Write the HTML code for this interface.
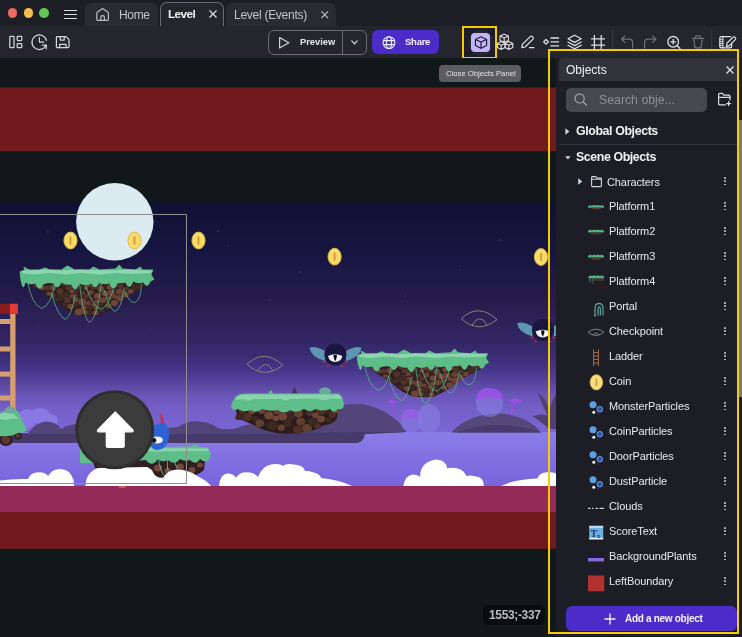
<!DOCTYPE html>
<html><head><meta charset="utf-8">
<style>
*{box-sizing:border-box;margin:0;padding:0}
html,body{width:742px;height:637px;overflow:hidden;background:#1d1d26;font-family:"Liberation Sans",sans-serif;color:#e6e6ea}
.a{position:absolute}
.t{position:absolute;white-space:nowrap;line-height:1;will-change:transform}
svg{position:absolute;overflow:visible}
.row{position:absolute;left:556px;width:180px;height:25px}
.row .n{position:absolute;left:53px;top:7px;font-size:10.9px;color:#ececf0;white-space:nowrap;line-height:1}
.row .k{position:absolute;left:168px;top:8px;width:2px;height:9px}
.k i{position:absolute;left:0.2px;width:1.7px;height:1.7px;border-radius:1px;background:#d4d4d8}
</style></head><body>
<!-- title bar -->
<div class="a" style="left:0;top:0;width:742px;height:26px;background:#1d1d26"></div>
<div class="a" style="left:7.8px;top:8.3px;width:9.5px;height:9.5px;border-radius:50%;background:#ec6a5f"></div>
<div class="a" style="left:23.6px;top:8.3px;width:9.5px;height:9.5px;border-radius:50%;background:#f4bf4f"></div>
<div class="a" style="left:39px;top:8.3px;width:9.5px;height:9.5px;border-radius:50%;background:#61c454"></div>
<div class="a" style="left:63.6px;top:9.6px;width:13.8px;height:1.3px;background:#dcdce0"></div>
<div class="a" style="left:63.6px;top:13.7px;width:13.8px;height:1.3px;background:#dcdce0"></div>
<div class="a" style="left:63.6px;top:17.9px;width:13.8px;height:1.3px;background:#dcdce0"></div>
<!-- tabs -->
<div class="a" style="left:85px;top:2.5px;width:73px;height:23.5px;background:#2a2a33;border-radius:6px 6px 0 0"></div>
<svg style="left:96px;top:8px" width="14" height="13" viewBox="0 0 14 13"><path d="M0.8 5.2 Q0.8 4.4 1.5 3.9 L6.6 0.6 L11.7 3.9 Q12.4 4.4 12.4 5.2 V11.6 Q12.4 12.4 11.6 12.4 H1.6 Q0.8 12.4 0.8 11.6 Z M4.8 12.4 V9.3 Q4.8 7.6 6.6 7.6 Q8.4 7.6 8.4 9.3 V12.4" fill="none" stroke="#bdbdc2" stroke-width="1.2" stroke-linejoin="round"/></svg>
<div class="t" style="left:119px;top:9px;font-size:12px;letter-spacing:-0.35px;color:#c4c4c8">Home</div>
<div class="a" style="left:160px;top:2px;width:63.5px;height:25px;background:#25252e;border:1px solid #6a6a72;border-bottom:none;border-radius:7px 7px 0 0"></div>
<div class="t" style="left:168.4px;top:9px;font-size:11.8px;font-weight:700;letter-spacing:-0.6px;color:#f0f0f2">Level</div>
<svg style="left:209px;top:10px" width="8" height="8" viewBox="0 0 8 8"><path d="M0.5 0.5 L7.5 7.5 M7.5 0.5 L0.5 7.5" stroke="#e0e0e4" stroke-width="1.2"/></svg>
<div class="a" style="left:225.5px;top:2.5px;width:110px;height:23.5px;background:#2a2a33;border-radius:6px 6px 0 0"></div>
<div class="t" style="left:234px;top:9px;font-size:12px;letter-spacing:-0.27px;color:#c4c4c8">Level (Events)</div>
<svg style="left:321px;top:10.5px" width="7.5" height="7.5" viewBox="0 0 8 8"><path d="M0.5 0.5 L7.5 7.5 M7.5 0.5 L0.5 7.5" stroke="#c4c4c8" stroke-width="1.2"/></svg>

<!-- toolbar -->
<div class="a" style="left:0;top:26px;width:742px;height:32px;background:#25252e"></div>


<!-- toolbar icons left -->
<svg style="left:0;top:0" width="742" height="58" viewBox="0 0 742 58">
 <g fill="none" stroke="#d6d6da" stroke-width="1.25" stroke-linecap="round" stroke-linejoin="round">
  <rect x="9.8" y="36.3" width="4.2" height="11.4" rx="0.8"/>
  <rect x="17.2" y="36.3" width="4.6" height="4.2" rx="0.8"/>
  <rect x="17.2" y="43.5" width="4.6" height="4.2" rx="0.8"/>
  <path d="M46.4 40.4 A7.3 7.3 0 1 0 45.9 45.4"/>
  <path d="M39.4 37.6 V42.1 H43.8"/>
  <path d="M42.4 45 H46.3 V48.8"/>
  <path d="M57.2 36.6 H66 L69 39.6 V46.6 Q69 47.6 68 47.6 H57.2 Q56.4 47.6 56.4 46.8 V37.4 Q56.4 36.6 57.2 36.6 Z"/>
  <path d="M60.3 36.6 V40 H64.2 V36.6"/>
  <path d="M59.6 47.6 V44.4 H66 V47.6"/>
 </g>
</svg>
<!-- preview button -->
<div class="a" style="left:267.5px;top:29.5px;width:99px;height:25.5px;border:1px solid #6c6c74;border-radius:6px"></div>
<div class="a" style="left:342.3px;top:30px;width:1px;height:24.5px;background:#6c6c74"></div>
<svg style="left:278px;top:35.5px" width="12" height="13" viewBox="0 0 12 13"><path d="M1.6 1.6 L10.8 6.8 L1.6 12 Z" fill="none" stroke="#d6d6da" stroke-width="1.2" stroke-linejoin="round"/></svg>
<div class="t" style="left:299.8px;top:38px;font-size:9.3px;font-weight:700;color:#e6e6ea">Preview</div>
<svg style="left:351px;top:40px" width="7" height="5" viewBox="0 0 7 5"><path d="M0.8 0.8 L3.5 3.8 L6.2 0.8" fill="none" stroke="#d6d6da" stroke-width="1.2" stroke-linecap="round"/></svg>
<!-- share button -->
<div class="a" style="left:372px;top:29.7px;width:66.5px;height:24.5px;background:#4c2cc8;border-radius:6px"></div>
<svg style="left:382px;top:35.5px" width="14" height="14" viewBox="0 0 14 14"><g fill="none" stroke="#f0f0f4" stroke-width="1.1"><circle cx="7" cy="6.6" r="5.9"/><ellipse cx="7" cy="6.6" rx="2.6" ry="5.9"/><path d="M1.4 4.6 H12.6 M1.4 8.6 H12.6"/></g></svg>
<div class="t" style="left:405px;top:37px;font-size:9.5px;font-weight:700;letter-spacing:-0.25px;color:#f4f4f8">Share</div>
<!-- objects toggle (highlighted) -->
<div class="a" style="left:462.2px;top:26px;width:35.3px;height:32.6px;background:#1d1d2a;border:2px solid #f4cc00"></div>
<div class="a" style="left:467.5px;top:29.5px;width:26px;height:26px;border-radius:50%;background:#25252f"></div>
<div class="a" style="left:471px;top:32.7px;width:19.2px;height:19.2px;border-radius:4px;background:#c3b3fb"></div>
<svg style="left:474px;top:35.5px" width="14" height="13" viewBox="0 0 14 13"><g fill="none" stroke="#1e1830" stroke-width="1.15" stroke-linejoin="round"><path d="M7 0.8 L12.6 3.4 V9.4 L7 12.2 L1.4 9.4 V3.4 Z"/><path d="M1.4 3.4 L7 6 L12.6 3.4 M7 6 V12.2"/></g></svg>
<!-- right icons -->
<svg style="left:0;top:0" width="742" height="58" viewBox="0 0 742 58">
 <g fill="none" stroke="#e0e0e4" stroke-width="1.1" stroke-linejoin="round">
  <path d="M504.2 34.2 L508.4 36.1 V40.4 L504.2 42.3 L500 40.4 V36.1 Z M500 36.1 L504.2 38 L508.4 36.1 M504.2 38 V42.3"/>
  <path d="M501.2 41.6 L505.2 43.4 V47.6 L501.2 49.4 L497.4 47.6 V43.4 Z M497.4 43.4 L501.2 45.2 L505.2 43.4 M501.2 45.2 V49.4"/>
  <path d="M508.8 41.6 L512.8 43.4 V47.6 L508.8 49.4 L505 47.6 V43.4 Z M505 43.4 L508.8 45.2 L512.8 43.4 M508.8 45.2 V49.4"/>
 </g>
 <g fill="none" stroke="#e0e0e4" stroke-width="1.25" stroke-linecap="round" stroke-linejoin="round">
  <path d="M522 47.6 L522.3 44.4 L530.3 36.6 Q531.3 35.7 532.3 36.6 L533 37.3 Q533.8 38.2 533 39.1 L525 47 Z"/>
  <path d="M529.5 47.7 H533.8"/>
  <path d="M546 39.5 L548.4 41.8 L546 44.1 L543.7 41.8 Z"/>
  <path d="M551 38 H558.5 M551 41.9 H558.5 M551 45.9 H558.5" stroke-width="1.4"/>
  <path d="M574.6 35.2 L581.2 38.8 L574.6 42.4 L568 38.8 Z"/>
  <path d="M568 42 L574.6 45.6 L581.2 42 M568 45.2 L574.6 48.8 L581.2 45.2"/>
  <path d="M594.4 35 V49 M601.2 35 V49 M591.1 38.9 H605 M591.1 45 H605" stroke-linecap="butt"/>
 </g>
 <rect x="612.2" y="29.6" width="1" height="22" fill="#3c3c46"/>
 <rect x="711.3" y="29.6" width="1" height="22" fill="#3c3c46"/>
 <g fill="none" stroke="#6e6e78" stroke-width="1.25" stroke-linecap="round" stroke-linejoin="round">
  <path d="M632.6 48 V42.6 Q632.6 39.2 629.2 39.2 H621.8 M624.8 36 L621.6 39.2 L624.8 42.4"/>
  <path d="M644.6 48 V42.6 Q644.6 39.2 648 39.2 H655.6 M652.6 36 L655.8 39.2 L652.6 42.4"/>
  <path d="M692.4 38.4 H703.6 M695.6 38.4 V36.6 Q695.6 35.8 696.4 35.8 H699.6 Q700.4 35.8 700.4 36.6 V38.4 M693.8 38.4 L694.8 47.2 Q694.9 47.9 695.6 47.9 H700.4 Q701.1 47.9 701.2 47.2 L702.2 38.4"/>
 </g>
 <g fill="none" stroke="#e0e0e4" stroke-width="1.3" stroke-linecap="round" stroke-linejoin="round">
  <circle cx="673.2" cy="41.8" r="5.3"/>
  <path d="M677 45.6 L680 48.4 M673.2 39.5 V44.1 M670.9 41.8 H675.5"/>
  <path d="M730.5 36.6 H721.4 Q719.8 36.6 719.8 38.2 V46.2 Q719.8 47.8 721.4 47.8 H730 Q731.6 47.8 731.6 46.2 V43.2"/>
  <path d="M722.9 36.6 V47.8" stroke-width="1.1"/>
  <path d="M720.4 39.6 H722.4 M720.4 41.6 H722.4 M720.4 43.5 H722.4 M720.4 45.4 H722.4" stroke-width="0.8"/>
  <path d="M726.4 46.4 L726.9 43.3 L733 37.3 Q734 36.4 735 37.3 L735.3 37.6 Q736.2 38.6 735.3 39.6 L729.4 45.6 Z" stroke-width="1.2"/>
 </g>
</svg>

<!-- scene canvas -->
<div class="a" id="scene" style="left:0;top:58px;width:556px;height:579px;background:#11181a;overflow:hidden">
<svg style="left:0;top:0" width="556" height="579" viewBox="0 58 556 579">
<defs>
 <linearGradient id="gnd" x1="0" y1="432" x2="0" y2="486" gradientUnits="userSpaceOnUse"><stop offset="0" stop-color="#8c7ce8"/><stop offset="1" stop-color="#7864dc"/></linearGradient>
 <linearGradient id="sky" x1="0" y1="202.6" x2="0" y2="486" gradientUnits="userSpaceOnUse">
  <stop offset="0" stop-color="#0e1234"/>
  <stop offset="0.167" stop-color="#161540"/>
  <stop offset="0.344" stop-color="#261c4c"/>
  <stop offset="0.414" stop-color="#2c2258"/>
  <stop offset="0.485" stop-color="#322664"/>
  <stop offset="0.538" stop-color="#3a2c72"/>
  <stop offset="0.591" stop-color="#46368a"/>
  <stop offset="0.643" stop-color="#5a48a2"/>
  <stop offset="0.679" stop-color="#6a56b8"/>
  <stop offset="0.732" stop-color="#7460c8"/>
  <stop offset="0.81" stop-color="#7a66d4"/>
  <stop offset="1" stop-color="#7864dc"/>
 </linearGradient>
 <symbol id="plat" viewBox="0 0 135 61" preserveAspectRatio="none">
  <path d="M3 13 L12 20 L22 27 L34 35 L46 45 L58 51 L78 51 L92 44 L104 34 L116 27 L129 20 L129 13 Z" fill="#2f1f20"/>
  <g><ellipse cx="71.3" cy="27.9" rx="2.9" ry="2.5" fill="#684234"/><ellipse cx="81.0" cy="17.3" rx="3.7" ry="3.2" fill="#684234"/><ellipse cx="106.9" cy="24.1" rx="2.4" ry="2.1" fill="#523428"/><ellipse cx="63.2" cy="37.4" rx="4.2" ry="3.6" fill="#684234"/><ellipse cx="82.3" cy="45.4" rx="2.7" ry="2.3" fill="#402a24"/><ellipse cx="94.9" cy="38.5" rx="3.6" ry="3.0" fill="#6e4638"/><ellipse cx="59.4" cy="47.7" rx="4.2" ry="3.5" fill="#6e4638"/><ellipse cx="18.2" cy="19.8" rx="4.3" ry="3.7" fill="#523428"/><ellipse cx="42.2" cy="32.8" rx="3.8" ry="3.2" fill="#402a24"/><ellipse cx="48.1" cy="35.5" rx="3.2" ry="2.8" fill="#523428"/><ellipse cx="40.3" cy="17.2" rx="3.7" ry="3.1" fill="#684234"/><ellipse cx="124.2" cy="18.1" rx="4.3" ry="3.6" fill="#402a24"/><ellipse cx="55.3" cy="20.3" rx="4.2" ry="3.5" fill="#6e4638"/><ellipse cx="29.4" cy="29.3" rx="2.5" ry="2.1" fill="#684234"/><ellipse cx="24.9" cy="16.5" rx="3.7" ry="3.2" fill="#684234"/><ellipse cx="83.2" cy="35.8" rx="3.5" ry="3.0" fill="#684234"/><ellipse cx="71.8" cy="15.4" rx="3.5" ry="3.0" fill="#402a24"/><ellipse cx="51.2" cy="42.0" rx="3.1" ry="2.6" fill="#6e4638"/><ellipse cx="74.4" cy="40.7" rx="2.5" ry="2.1" fill="#684234"/><ellipse cx="106.1" cy="30.3" rx="3.1" ry="2.7" fill="#6e4638"/><ellipse cx="47.5" cy="29.6" rx="3.0" ry="2.5" fill="#402a24"/><ellipse cx="116.7" cy="22.8" rx="4.5" ry="3.8" fill="#402a24"/><ellipse cx="40.7" cy="26.9" rx="3.5" ry="3.0" fill="#523428"/><ellipse cx="103.3" cy="16.6" rx="3.0" ry="2.6" fill="#684234"/><ellipse cx="95.7" cy="21.0" rx="2.4" ry="2.1" fill="#6e4638"/><ellipse cx="99.8" cy="27.3" rx="3.4" ry="2.9" fill="#684234"/><ellipse cx="70.2" cy="43.6" rx="2.8" ry="2.4" fill="#402a24"/><ellipse cx="109.3" cy="16.7" rx="3.8" ry="3.2" fill="#684234"/><ellipse cx="45.3" cy="19.3" rx="2.8" ry="2.4" fill="#523428"/><ellipse cx="91.9" cy="28.3" rx="3.6" ry="3.1" fill="#684234"/><ellipse cx="56.9" cy="29.9" rx="2.6" ry="2.2" fill="#402a24"/><ellipse cx="27.4" cy="23.7" rx="2.9" ry="2.5" fill="#523428"/><ellipse cx="89.0" cy="41.5" rx="2.8" ry="2.3" fill="#684234"/><ellipse cx="63.5" cy="28.4" rx="2.5" ry="2.1" fill="#523428"/><ellipse cx="77.9" cy="31.4" rx="3.5" ry="2.9" fill="#6e4638"/><ellipse cx="33.6" cy="23.2" rx="3.4" ry="2.9" fill="#684234"/><ellipse cx="87.0" cy="15.2" rx="3.7" ry="3.1" fill="#523428"/><ellipse cx="76.3" cy="48.4" rx="2.9" ry="2.4" fill="#6e4638"/><ellipse cx="45.7" cy="40.2" rx="2.7" ry="2.3" fill="#402a24"/><ellipse cx="66.6" cy="23.7" rx="2.5" ry="2.1" fill="#6e4638"/><ellipse cx="55.9" cy="41.0" rx="2.8" ry="2.4" fill="#402a24"/><ellipse cx="74.2" cy="22.1" rx="3.6" ry="3.0" fill="#523428"/><ellipse cx="72.3" cy="35.4" rx="3.2" ry="2.8" fill="#402a24"/><ellipse cx="93.1" cy="15.1" rx="3.7" ry="3.2" fill="#523428"/><ellipse cx="34.0" cy="17.7" rx="3.2" ry="2.7" fill="#402a24"/><ellipse cx="52.7" cy="26.7" rx="2.7" ry="2.3" fill="#684234"/><ellipse cx="100.5" cy="33.7" rx="3.7" ry="3.2" fill="#684234"/><ellipse cx="61.8" cy="22.8" rx="2.6" ry="2.2" fill="#402a24"/><ellipse cx="56.2" cy="35.4" rx="3.1" ry="2.7" fill="#684234"/><ellipse cx="33.6" cy="31.4" rx="2.6" ry="2.2" fill="#523428"/><ellipse cx="90.0" cy="22.5" rx="2.9" ry="2.5" fill="#6e4638"/><ellipse cx="70.4" cy="48.9" rx="2.8" ry="2.4" fill="#402a24"/><ellipse cx="101.3" cy="22.0" rx="2.9" ry="2.5" fill="#523428"/><ellipse cx="117.8" cy="16.0" rx="2.6" ry="2.2" fill="#402a24"/><ellipse cx="69.3" cy="20.1" rx="2.6" ry="2.2" fill="#684234"/><ellipse cx="61.9" cy="16.1" rx="3.0" ry="2.6" fill="#402a24"/><ellipse cx="85.9" cy="29.2" rx="3.5" ry="3.0" fill="#6e4638"/><ellipse cx="81.4" cy="24.4" rx="3.5" ry="3.0" fill="#684234"/><ellipse cx="67.0" cy="31.5" rx="2.8" ry="2.4" fill="#523428"/><ellipse cx="48.5" cy="15.1" rx="2.4" ry="2.1" fill="#684234"/><ellipse cx="13.2" cy="15.3" rx="3.5" ry="3.0" fill="#684234"/><ellipse cx="89.7" cy="33.7" rx="2.4" ry="2.1" fill="#684234"/><ellipse cx="65.5" cy="47.8" rx="2.8" ry="2.4" fill="#684234"/><ellipse cx="111.2" cy="26.9" rx="2.8" ry="2.4" fill="#6e4638"/><ellipse cx="49.0" cy="23.6" rx="3.0" ry="2.5" fill="#523428"/><ellipse cx="22.7" cy="23.5" rx="2.6" ry="2.2" fill="#6e4638"/><ellipse cx="80.2" cy="41.0" rx="2.9" ry="2.4" fill="#402a24"/><ellipse cx="64.4" cy="43.2" rx="2.9" ry="2.5" fill="#684234"/><ellipse cx="77.2" cy="37.2" rx="2.5" ry="2.1" fill="#6e4638"/><ellipse cx="95.3" cy="32.2" rx="2.6" ry="2.2" fill="#684234"/><ellipse cx="52.9" cy="31.8" rx="2.5" ry="2.1" fill="#684234"/><ellipse cx="37.5" cy="35.2" rx="2.5" ry="2.1" fill="#402a24"/><ellipse cx="69.0" cy="39.0" rx="2.5" ry="2.1" fill="#684234"/><ellipse cx="57.4" cy="25.5" rx="2.5" ry="2.1" fill="#402a24"/><ellipse cx="76.8" cy="44.0" rx="2.5" ry="2.1" fill="#684234"/></g>
  <path d="M0 7 L5 6 L4 2 L10 5 L20 5 L26 3 L30 5 L42 5 L48 1 L52 3 L55 5 L70 5 L74 2 L80 5 L96 4 L100 0 L103 4 L116 5 L121 2 L123 5 L134 5 L132 10 L135 15 L131 17 Q128 25 124 18 Q118 20 114 17 Q110 27 106 18 L98 19 Q94 29 90 19 Q84 21 80 18 Q76 27 72 19 Q66 22 60 19 Q56 30 52 20 Q46 21 42 18 Q38 27 34 19 Q28 18 24 20 Q20 29 16 19 Q10 21 6 18 Q4 27 2 19 L1 15 Z" fill="#5ebe8a"/>
  <path d="M2 6 L30 5 L42 6 L60 5 L90 6 L110 5 L133 6 L131 8.5 L112 9.5 L98 8.5 L80 10 L62 8.5 L46 10 L30 8.5 L14 10 L3 9 Z" fill="#92d8b2" opacity="0.9"/>
 </symbol>
 <symbol id="vines" viewBox="0 0 135 61" preserveAspectRatio="none">
  <g fill="none" stroke="#5cbc8c" stroke-width="0.9" opacity="0.85">
   <path d="M8 16 Q12 40 22 44 Q32 42 36 16"/>
   <path d="M32 28 Q38 52 46 55 Q52 52 56 30"/>
   <path d="M60 18 Q64 54 70 58 Q78 54 82 18"/>
   <path d="M64 15 Q72 42 82 45 Q92 40 96 14"/>
   <path d="M85 26 Q90 46 96 47 Q102 44 104 26"/>
   <path d="M104 24 Q110 40 116 38 Q122 34 122 20"/>
  </g>
 </symbol>
</defs>
<rect x="0" y="87.5" width="556" height="63.8" fill="#701a1e"/>
<rect x="0" y="202.6" width="556" height="283.4" fill="url(#sky)"/>
<!-- stars -->
<g fill="#3c3a6e">
 <circle cx="48" cy="232" r="0.8"/><circle cx="218" cy="231" r="0.9"/><circle cx="228" cy="246" r="0.7"/><circle cx="300" cy="272" r="0.8"/>
 <circle cx="270" cy="300" r="0.7"/><circle cx="405" cy="296" r="0.8"/><circle cx="150" cy="330" r="0.7"/><circle cx="40" cy="325" r="0.7"/>
 <circle cx="500" cy="240" r="0.8"/><circle cx="460" cy="270" r="0.7"/>
</g>
<!-- far lavender clouds -->
<g fill="#8a78e4">
 <ellipse cx="27" cy="419" rx="9" ry="10"/><ellipse cx="40" cy="416" rx="10" ry="8"/><ellipse cx="50" cy="421" rx="8" ry="7"/>
</g>
<!-- ground band -->
<rect x="0" y="432" width="556" height="54" fill="url(#gnd)"/>
<!-- hills -->
<path d="M0 443 V433 H28 Q38 421 47 421.5 Q57 422 61 429 Q68 424 80 424 L150 430 Q165 428 178 427 Q188 420 199 421.6 Q210 422 218 428 Q230 431 240 427 Q250 423 258 425 Q268 430 285 426 Q320 403 362 404 Q392 410 407 432 L365 434 Q363 443 355 443 Z" fill="#52457a"/>
<path d="M0 443 V434 L150 434 Q250 435 300 433 Q340 432 380 432 L407 432 L365 434 Q363 443 355 443 Z" fill="#473a6b"/>
<path d="M451 432.5 Q470 413 500 413.5 Q528 416 541 432.5 Z" fill="#54477a"/>
<path d="M456 432.5 Q480 424 500 425 Q525 426 541 432.5 Z" fill="#483b6c"/>
<path d="M537.5 392.3 Q546 398 549 410 Q552 400 556 394 V429 Q550 429 547 427 Q540 421 532.3 416.3 Q541 413 547.5 415.5 Q542 404 537.5 392.3 Z" fill="#4e4070"/>
<!-- mushrooms -->
<g opacity="0.9">
 <rect x="401" y="409" width="20" height="24" rx="10" fill="#8a7ce4" opacity="0.6"/>
 <path d="M401 419 Q401 409 411 409 Q421 409 421 419 Q411 416 401 419 Z" fill="#a05ae8" opacity="0.8"/>
 <rect x="418" y="404" width="22" height="29" rx="11" fill="#8a82e6" opacity="0.6"/>
 <rect x="476" y="388" width="27" height="29" rx="13.5" fill="#8a80e4" opacity="0.65"/>
 <path d="M476 400 Q476 388 489.5 388 Q503 388 503 400 Q489.5 396 476 400 Z" fill="#a050ea" opacity="0.85"/>
</g>
<g fill="#a44ae8">
 <path d="M387 402 Q392 398 397 402 Q392 404 387 402 Z"/><path d="M391.6 403 L393 403 L396 418 L394.5 418 Z"/>
 <path d="M508 401 Q515 396 522 401 Q515 404 508 401 Z"/><path d="M514 403 L516 403 L511 414 L509.5 414 Z"/>
</g>
<!-- moon -->
<circle cx="114.8" cy="221.8" r="38.7" fill="#dcebf1"/>
<!-- coins -->
<g>
<ellipse cx="70.5" cy="240.5" rx="6.6" ry="8.4" fill="#f7dc6c" stroke="#dfb443" stroke-width="0.9"/><rect x="69.6" y="236.3" width="1.8" height="8.4" rx="0.9" fill="#d49a30"/>
<ellipse cx="134.5" cy="240.5" rx="6.6" ry="8.4" fill="#f7dc6c" stroke="#dfb443" stroke-width="0.9"/><rect x="133.6" y="236.3" width="1.8" height="8.4" rx="0.9" fill="#d49a30"/>
<ellipse cx="198.5" cy="240.5" rx="6.6" ry="8.4" fill="#f7dc6c" stroke="#dfb443" stroke-width="0.9"/><rect x="197.6" y="236.3" width="1.8" height="8.4" rx="0.9" fill="#d49a30"/>
<ellipse cx="334.6" cy="256.7" rx="6.6" ry="8.4" fill="#f7dc6c" stroke="#dfb443" stroke-width="0.9"/><rect x="333.70000000000005" y="252.5" width="1.8" height="8.4" rx="0.9" fill="#d49a30"/>
<ellipse cx="541" cy="257" rx="6.6" ry="8.4" fill="#f7dc6c" stroke="#dfb443" stroke-width="0.9"/><rect x="540.1" y="252.8" width="1.8" height="8.4" rx="0.9" fill="#d49a30"/>
</g>
<!-- checkpoints -->
<g fill="none" stroke="#8e8872" stroke-width="1" opacity="0.95">
 <path d="M247.1 364.2 Q264.3 348 282.8 365.2 Q264 380 247.1 364.2 Z"/><path d="M257.9 370.6 Q265.6 358 273 370.6"/>
 <path d="M461.3 318.6 Q478.5 302.4 497 319.6 Q478.2 334.4 461.3 318.6 Z"/><path d="M472.1 325 Q479.8 312.4 487.2 325"/>
</g>
<!-- ladder -->
<g fill="#d69f70">
 <rect x="10.2" y="313.8" width="5.3" height="99"/>
 <rect x="0" y="319" width="10.5" height="5"/><rect x="0" y="346.5" width="10.5" height="5"/>
 <rect x="0" y="371.6" width="10.5" height="5"/><rect x="0" y="395.5" width="10.5" height="5"/>
</g>
<rect x="0" y="303.8" width="11" height="10" fill="#8c1c1e"/>
<rect x="10" y="303.8" width="8" height="10" fill="#e23a36"/>
<!-- platforms -->
<use href="#plat" x="19.4" y="264.4" width="135" height="61"/>
<use href="#vines" x="19.4" y="264.4" width="135" height="61"/>
<use href="#plat" x="356.6" y="348.5" width="132.5" height="58"/>
<use href="#vines" x="356.6" y="348.5" width="132.5" height="58"/>
<g>
 <path d="M291.5 393.5 L294.5 386.7 L297.4 393.5 Z" fill="#3e3462"/>
 <path d="M236 409 H338 L337 418 Q333 425 324 425 Q316 431 304 432 Q290 435 276 433 Q262 430 256 426 Q246 422 240 419 Q236 414 236 409 Z" fill="#2a1b1c"/>
 <ellipse cx="287.8" cy="423.5" rx="4.3" ry="3.6" fill="#3e2822"/><ellipse cx="247.2" cy="417.0" rx="5.0" ry="4.3" fill="#4c3028"/><ellipse cx="317.3" cy="425.9" rx="3.4" ry="2.9" fill="#4c3028"/><ellipse cx="298.3" cy="413.6" rx="4.7" ry="4.0" fill="#62402f"/><ellipse cx="289.8" cy="411.4" rx="3.2" ry="2.7" fill="#4c3028"/><ellipse cx="261.7" cy="410.7" rx="3.6" ry="3.1" fill="#6e4434"/><ellipse cx="300.7" cy="421.5" rx="4.4" ry="3.7" fill="#62402f"/><ellipse cx="282.8" cy="416.4" rx="4.7" ry="4.0" fill="#6e4434"/><ellipse cx="268.9" cy="415.3" rx="4.8" ry="4.1" fill="#6e4434"/><ellipse cx="321.0" cy="418.9" rx="4.1" ry="3.5" fill="#6e4434"/><ellipse cx="321.0" cy="410.0" rx="5.4" ry="4.6" fill="#4c3028"/><ellipse cx="309.7" cy="413.0" rx="3.6" ry="3.1" fill="#4c3028"/><ellipse cx="332.3" cy="415.5" rx="3.3" ry="2.8" fill="#4c3028"/><ellipse cx="255.3" cy="418.5" rx="3.3" ry="2.8" fill="#3e2822"/><ellipse cx="307.0" cy="428.2" rx="4.9" ry="4.2" fill="#62402f"/><ellipse cx="272.5" cy="425.8" rx="5.3" ry="4.5" fill="#3e2822"/><ellipse cx="239.1" cy="416.9" rx="3.8" ry="3.2" fill="#3e2822"/><ellipse cx="251.8" cy="411.1" rx="3.7" ry="3.2" fill="#6e4434"/><ellipse cx="297.9" cy="429.7" rx="5.2" ry="4.4" fill="#4c3028"/><ellipse cx="312.3" cy="421.6" rx="4.4" ry="3.7" fill="#3e2822"/><ellipse cx="277.4" cy="411.2" rx="3.8" ry="3.2" fill="#62402f"/><ellipse cx="281.2" cy="427.8" rx="3.7" ry="3.2" fill="#62402f"/><ellipse cx="259.7" cy="423.3" rx="4.3" ry="3.7" fill="#62402f"/><ellipse cx="242.0" cy="410.6" rx="3.7" ry="3.1" fill="#4c3028"/><ellipse cx="275.9" cy="418.3" rx="3.3" ry="2.8" fill="#6e4434"/><ellipse cx="290.7" cy="417.4" rx="3.3" ry="2.8" fill="#3e2822"/><ellipse cx="315.6" cy="415.3" rx="3.4" ry="2.9" fill="#6e4434"/><ellipse cx="328.6" cy="420.1" rx="3.2" ry="2.7" fill="#3e2822"/><ellipse cx="329.0" cy="410.2" rx="3.7" ry="3.2" fill="#3e2822"/><ellipse cx="335.6" cy="410.2" rx="3.8" ry="3.2" fill="#6e4434"/>
 <ellipse cx="325" cy="391.5" rx="6" ry="4" fill="#6aa8a0"/>
 <path d="M231 406 Q233 398 238 395 Q240 393.5 246 393.5 L268 393.5 L271 390 L273 393.5 H338 Q343 395 343.8 404 Q344 410 338 409 Q334 414 330 409 Q322 412 316 409 Q310 413 304 409 Q296 414 290 410 Q284 415 278 410 Q270 412 262 409 Q256 414 250 410 Q244 413 238 409 Q232 412 231 406 Z" fill="#5ebe8a"/>
 <path d="M236 397 Q240 394.5 246 394.5 H338 Q341 395.5 342 399 L330 398.5 Q324 402 318 398.5 L290 399 Q286 402 282 399 L254 399 Q248 402 244 399 L236 400 Z" fill="#92d8b2" opacity="0.85"/>
</g>
<g>
 <ellipse cx="6" cy="440" rx="7" ry="6" fill="#2f1f20"/><ellipse cx="6" cy="440" rx="4.5" ry="4" fill="#5a3a30"/>
 <ellipse cx="18" cy="436" rx="4" ry="3.5" fill="#2f1f20"/><ellipse cx="18" cy="436" rx="2.5" ry="2" fill="#5a3a30"/>
 <path d="M0 413 Q4 410 8 411 Q10 407 14 409 Q20 412 20 416 Q24 424 27 430 Q24 433 18 433 Q10 437 0 436 Z" fill="#5ebe8a"/>
 <path d="M0 414 Q6 412 10 413 Q16 414 18 419 Q12 418 6 420 Q2 420 0 419 Z" fill="#92d8b2" opacity="0.8"/>
 <ellipse cx="10" cy="410" rx="5" ry="3.5" fill="#6aa8a0"/>
</g>
<path d="M92 458 H205 L204 470 Q196 477 186 476 Q172 479 160 477 Q140 474 120 472 L95 468 Z" fill="#2f1f20"/>
<g fill="#74483a"><ellipse cx="158" cy="468" rx="4" ry="3.5"/><ellipse cx="168" cy="471" rx="3.5" ry="3"/><ellipse cx="180" cy="467" rx="4" ry="3.5"/><ellipse cx="192" cy="470" rx="3.5" ry="3"/><ellipse cx="200" cy="465" rx="3" ry="2.5"/><ellipse cx="150" cy="471" rx="3" ry="2.5"/><ellipse cx="100" cy="464" rx="3" ry="2.5"/></g>
<path d="M80 449 L88 447 L146 447.5 L150 444 L154 447 L190 446.5 L196 444 L199 447 L208 447.5 L211 454 L209 460 Q204 463 200 459 Q196 466 190 460 Q184 462 180 459 Q174 466 168 460 Q162 463 158 459 Q152 468 146 460 Q120 462 100 462 Q90 464 80 463 Z" fill="#5ebe8a"/>
<path d="M82 448.5 L150 448 L208 448.5 L209 451 L150 451.5 L82 452 Z" fill="#92d8b2" opacity="0.8"/>
<g fill="none" stroke="#5cbc8c" stroke-width="0.9"><path d="M158 456 Q160 472 166 478"/><path d="M168 458 Q166 470 170 474"/><path d="M175 456 Q174 466 178 468"/></g>
<!-- flying monsters -->
<g id="fly">
 <path d="M325 351 Q314 345 309.5 348 Q311 357 325 361 Z" fill="#5b97b0"/>
 <path d="M346 351 Q357 345 361.5 348 Q360 357 346 361 Z" fill="#5b97b0"/>
 <circle cx="335.4" cy="354.5" r="11" fill="#1b1542"/>
 <path d="M328 356 Q335.2 352.5 342.4 356 Q341 361.8 335.2 362 Q329.4 361.8 328 356 Z" fill="#f4f4f8"/>
 <path d="M333.4 355.2 Q335.2 354.2 337 355.2 Q336.6 359.5 335.2 361.2 Q333.8 359.5 333.4 355.2 Z" fill="#0a0a14"/>
 <g fill="#b02a3a"><circle cx="324.5" cy="362" r="1.3"/><circle cx="328" cy="366" r="1.2"/><circle cx="342" cy="366" r="1.2"/><circle cx="346" cy="362" r="1.3"/></g>
</g>
<use href="#fly" x="207.6" y="-24.5"/>
<!-- blue monster -->
<path d="M159 412 Q166 418 164 428 L160 428 Q162 420 159 412Z" fill="#c03050"/>
<path d="M151 430 Q155 423 162 423 Q169 424 169 434 Q169 448 158 450 Q150 450 149 440 Z" fill="#2f62d2"/>
<ellipse cx="157" cy="440" rx="6" ry="3.5" fill="#f2f2f6"/>
<ellipse cx="154" cy="440.3" rx="2.2" ry="2.6" fill="#111"/>
<!-- clouds -->
<g fill="#ffffff">
 <path d="M0 486 V480.5 Q14 478.5 28 479 Q31 472 38.7 472.3 Q45 472 48 476 Q52 469 60.4 468.9 Q70 469 73.6 480 L74 486 Z"/>
 <path d="M85.5 486 Q86 472 98 468 L147 467 Q152 469 154 474 Q158 479 163 478 Q167 470 177 469.5 Q190 470 197 476 Q206 480 211 486 Z"/>
 <path d="M219 486 Q220 474 227.5 473.4 Q234 473.4 236 478 Q239 472 247 472.3 Q255 472.5 258 477 Q262 466 272 464.3 Q280 463 283 466 Q286 463 292 464.3 Q304 465 305 471 Q308 470.5 313 472.3 Q320 474 321 478 Q340 480 352 486 Z"/>
 <path d="M403.3 486 Q405 475 413 474.4 Q418 474.4 420 477 Q420 462 436.3 459.6 Q446 460 447 468.3 Q462 466 466.6 476 Q470 475 476 476.4 Q484 477 483.8 486 Z"/>
 <path d="M501 486 Q515 479 537.4 478.4 Q540 472 548 472.3 Q556 472 556 474 V486 Z"/>
</g>
<!-- bottom strips -->
<rect x="0" y="486" width="556" height="26" fill="#942a57"/>
<rect x="0" y="512" width="556" height="36.8" fill="#701a1e"/>
<rect x="118.7" y="486.2" width="7" height="1.6" fill="#e8704e" opacity="0.8"/>
<!-- selection rect -->
<path d="M-2 214.5 H186.5 V483.5 H-2" fill="none" stroke="#8e8e8e" stroke-width="1"/>
<!-- joystick -->
<circle cx="114.7" cy="429.7" r="39.5" fill="#2e2e2e"/>
<circle cx="114.7" cy="429.7" r="36.5" fill="#3b3b3b"/>
<path d="M115.3 412 L132.9 430 Q134 431.8 131.5 431.8 H124.2 V446 Q124.2 447.4 122.8 447.4 H107.7 Q106.3 447.4 106.3 446 V431.8 H99 Q96.6 431.8 97.7 430 Z" fill="#ffffff" stroke="#ffffff" stroke-width="1.2" stroke-linejoin="round"/>
</svg>
<!-- coordinates -->
<div class="a" style="left:483.3px;top:546.5px;width:61.3px;height:20.8px;background:#0a0d0e;border-radius:5px"></div>
<div class="t" style="left:488.6px;top:551px;font-size:12px;font-weight:700;letter-spacing:-0.35px;color:#bcbcbc">1553;-337</div>
</div>

<!-- objects panel -->
<div class="a" style="left:556px;top:58px;width:186px;height:579px;background:#1d1d26"></div>
<div class="a" style="left:559px;top:58px;width:178px;height:23px;background:#32323b;border-radius:4px 0 0 0"></div>
<div class="t" style="left:565.7px;top:64px;font-size:12px;color:#f0f0f2">Objects</div>


<svg style="left:726px;top:66px" width="8" height="8" viewBox="0 0 8 8"><path d="M0.5 0.5 L7.5 7.5 M7.5 0.5 L0.5 7.5" stroke="#e6e6ea" stroke-width="1.2"/></svg>
<div class="a" style="left:565.6px;top:87.5px;width:141px;height:24.2px;background:#47474f;border-radius:5px"></div>
<svg style="left:574px;top:93px" width="14" height="13" viewBox="0 0 14 13"><g fill="none" stroke="#a4a4ac" stroke-width="1.2" stroke-linecap="round"><circle cx="5.6" cy="5.4" r="4.6"/><path d="M9 8.8 L12.6 12.2"/></g></svg>
<div class="t" style="left:599.3px;top:94px;font-size:12.3px;color:#8e8e96">Search obje...</div>
<svg style="left:717px;top:92px" width="15" height="15" viewBox="0 0 15 15"><g fill="none" stroke="#dcdce0" stroke-width="1.2" stroke-linecap="round" stroke-linejoin="round"><path d="M8.5 12.8 H2.8 Q1.6 12.8 1.6 11.6 V2.6 Q1.6 1.4 2.8 1.4 H5.4 L6.8 3.2 H11.8 Q13 3.2 13 4.4 V8"/><path d="M1.6 5.4 H13"/><path d="M11.6 9.6 V13.6 M9.6 11.6 H13.6"/></g></svg>
<svg style="left:565px;top:128px" width="5" height="7" viewBox="0 0 5 7"><path d="M0.4 0.3 L4.4 3.5 L0.4 6.7 Z" fill="#d4d0ec"/></svg>
<div class="t" style="left:576px;top:125.2px;font-size:12.4px;font-weight:700;letter-spacing:-0.4px;color:#f2f2f4">Global Objects</div>
<div class="a" style="left:559px;top:144px;width:178px;height:1px;background:#33333d"></div>
<svg style="left:565px;top:155.5px" width="6" height="4" viewBox="0 0 6 4"><path d="M0.2 0.2 L5.6 0.2 L2.9 3.6 Z" fill="#d4d0ec"/></svg>
<div class="t" style="left:576px;top:151px;font-size:12.4px;font-weight:700;letter-spacing:-0.42px;color:#f2f2f4">Scene Objects</div>
<svg style="left:578px;top:178px" width="5" height="7" viewBox="0 0 5 7"><path d="M0.2 0.2 L4.2 3.5 L0.2 6.8 Z" fill="#d4d0ec"/></svg>
<svg style="left:590.5px;top:176px" width="12" height="11" viewBox="0 0 12 11"><path d="M1.6 0.6 H4.4 Q5 0.6 5.4 1.2 L5.9 2 H9.6 Q10.4 2 10.4 2.8 V9.8 Q10.4 10.6 9.6 10.6 H1.4 Q0.6 10.6 0.6 9.8 V1.4 Q0.6 0.6 1.4 0.6 Z M0.6 3.2 H10.4" fill="none" stroke="#d8d8dc" stroke-width="1.1" stroke-linejoin="round"/></svg>
<div class="t" style="left:606.8px;top:176.6px;font-size:11px;letter-spacing:-0.1px;color:#e8e8ec">Characters</div>
<div class="k a" style="left:724px;top:177px;width:2px;height:9px"><i style="top:0"></i><i style="top:3.4px"></i><i style="top:6.8px"></i></div>
<div class="t" style="left:609px;top:201.4px;font-size:11px;letter-spacing:-0.1px;color:#e8e8ec">Platform1</div>
<div class="k a" style="left:724px;top:202.0px;width:2px;height:9px"><i style="top:0"></i><i style="top:3.4px"></i><i style="top:6.8px"></i></div>
<div class="t" style="left:609px;top:226.4px;font-size:11px;letter-spacing:-0.1px;color:#e8e8ec">Platform2</div>
<div class="k a" style="left:724px;top:227.0px;width:2px;height:9px"><i style="top:0"></i><i style="top:3.4px"></i><i style="top:6.8px"></i></div>
<div class="t" style="left:609px;top:251.4px;font-size:11px;letter-spacing:-0.1px;color:#e8e8ec">Platform3</div>
<div class="k a" style="left:724px;top:252.0px;width:2px;height:9px"><i style="top:0"></i><i style="top:3.4px"></i><i style="top:6.8px"></i></div>
<div class="t" style="left:609px;top:276.4px;font-size:11px;letter-spacing:-0.1px;color:#e8e8ec">Platform4</div>
<div class="k a" style="left:724px;top:277.0px;width:2px;height:9px"><i style="top:0"></i><i style="top:3.4px"></i><i style="top:6.8px"></i></div>
<div class="t" style="left:609px;top:301.4px;font-size:11px;letter-spacing:-0.1px;color:#e8e8ec">Portal</div>
<div class="k a" style="left:724px;top:302.0px;width:2px;height:9px"><i style="top:0"></i><i style="top:3.4px"></i><i style="top:6.8px"></i></div>
<div class="t" style="left:609px;top:326.4px;font-size:11px;letter-spacing:-0.1px;color:#e8e8ec">Checkpoint</div>
<div class="k a" style="left:724px;top:327.0px;width:2px;height:9px"><i style="top:0"></i><i style="top:3.4px"></i><i style="top:6.8px"></i></div>
<div class="t" style="left:609px;top:351.4px;font-size:11px;letter-spacing:-0.1px;color:#e8e8ec">Ladder</div>
<div class="k a" style="left:724px;top:352.0px;width:2px;height:9px"><i style="top:0"></i><i style="top:3.4px"></i><i style="top:6.8px"></i></div>
<div class="t" style="left:609px;top:376.4px;font-size:11px;letter-spacing:-0.1px;color:#e8e8ec">Coin</div>
<div class="k a" style="left:724px;top:377.0px;width:2px;height:9px"><i style="top:0"></i><i style="top:3.4px"></i><i style="top:6.8px"></i></div>
<div class="t" style="left:609px;top:401.4px;font-size:11px;letter-spacing:-0.1px;color:#e8e8ec">MonsterParticles</div>
<div class="k a" style="left:724px;top:402.0px;width:2px;height:9px"><i style="top:0"></i><i style="top:3.4px"></i><i style="top:6.8px"></i></div>
<div class="t" style="left:609px;top:426.4px;font-size:11px;letter-spacing:-0.1px;color:#e8e8ec">CoinParticles</div>
<div class="k a" style="left:724px;top:427.0px;width:2px;height:9px"><i style="top:0"></i><i style="top:3.4px"></i><i style="top:6.8px"></i></div>
<div class="t" style="left:609px;top:451.4px;font-size:11px;letter-spacing:-0.1px;color:#e8e8ec">DoorParticles</div>
<div class="k a" style="left:724px;top:452.0px;width:2px;height:9px"><i style="top:0"></i><i style="top:3.4px"></i><i style="top:6.8px"></i></div>
<div class="t" style="left:609px;top:476.4px;font-size:11px;letter-spacing:-0.1px;color:#e8e8ec">DustParticle</div>
<div class="k a" style="left:724px;top:477.0px;width:2px;height:9px"><i style="top:0"></i><i style="top:3.4px"></i><i style="top:6.8px"></i></div>
<div class="t" style="left:609px;top:501.4px;font-size:11px;letter-spacing:-0.1px;color:#e8e8ec">Clouds</div>
<div class="k a" style="left:724px;top:502.0px;width:2px;height:9px"><i style="top:0"></i><i style="top:3.4px"></i><i style="top:6.8px"></i></div>
<div class="t" style="left:609px;top:526.4px;font-size:11px;letter-spacing:-0.1px;color:#e8e8ec">ScoreText</div>
<div class="k a" style="left:724px;top:527.0px;width:2px;height:9px"><i style="top:0"></i><i style="top:3.4px"></i><i style="top:6.8px"></i></div>
<div class="t" style="left:609px;top:551.4px;font-size:11px;letter-spacing:-0.1px;color:#e8e8ec">BackgroundPlants</div>
<div class="k a" style="left:724px;top:552.0px;width:2px;height:9px"><i style="top:0"></i><i style="top:3.4px"></i><i style="top:6.8px"></i></div>
<div class="t" style="left:609px;top:576.4px;font-size:11px;letter-spacing:-0.1px;color:#e8e8ec">LeftBoundary</div>
<div class="k a" style="left:724px;top:577.0px;width:2px;height:9px"><i style="top:0"></i><i style="top:3.4px"></i><i style="top:6.8px"></i></div>

<!-- row icons -->
<svg style="left:0;top:0" width="742" height="637" viewBox="0 0 742 637">
 <g>
  <path d="M588 206.5 L590 205.2 L592 205.8 L594 204.8 L596 205.6 L598 204.9 L600 205.7 L602 205 L604 206.3 V207.5 H588Z" fill="#52b082"/>
  <path d="M590 207.5 H603 L600 209.3 H593 Z" fill="#5a3a32"/>
  <path d="M588 207 H604" stroke="#8fd6b0" stroke-width="0.4" opacity="0.6"/>
  <path d="M588 231 L590 229.6 L592 230.4 L594 229.4 L596 230.2 L598 229.5 L600 230.3 L602 229.6 L604 230.9 V232.4 H588Z" fill="#52b082"/>
  <path d="M589 232.4 H603 L600 234.6 H592 Z" fill="#4e3430"/>
  <path d="M588 256 L590 254.6 L592 255.4 L594 254.4 L596 255.2 L598 254.5 L600 255.3 L602 254.6 L604 255.9 V257.4 H588Z" fill="#52b082"/>
  <path d="M589.5 257.4 H603 L600 259.8 H593 Z" fill="#5a3a32"/>
  <path d="M588.5 276.5 L590 275.4 L592 276 L594 275.2 L596 276 L598 275.3 L600 276 L602 275.4 L604 276.4 V278.6 H588.5Z" fill="#52b082"/>
  <path d="M589 278.6 H604 V281 H589Z" fill="#3a3434"/>
  <path d="M590 279 V283 M593 279 V284" stroke="#4a8a6a" stroke-width="0.6"/>
  <rect x="597.5" y="281" width="6.5" height="7.5" fill="#2a1a18"/>
 </g>
 <g fill="none" stroke="#5a9c9a" stroke-width="1.3">
  <path d="M595 315.5 V308.5 Q595 303.5 599 303.5 Q603 303.5 603 308.5 V315.5"/>
  <path d="M598 315.5 V309 Q598 307 599.2 307 Q600.4 307 600.4 309 V315.5"/>
  <path d="M594 315.6 H596"/>
 </g>
 <g fill="none" stroke="#8a8a90" stroke-width="0.9">
  <path d="M588 332.3 Q596 326 604 332.3 Q596 338.6 588 332.3 Z"/>
  <path d="M592.6 335.3 Q596 330.5 599.4 335.3"/>
 </g>
 <g stroke="#9c6a48" stroke-width="1.1">
  <path d="M593.6 349.5 V366 M598.4 349.5 V366"/>
  <path d="M593.6 352.5 H598.4 M593.6 356 H598.4 M593.6 359.5 H598.4 M593.6 363 H598.4"/>
 </g>
 <ellipse cx="596.4" cy="382.3" rx="6.3" ry="7.6" fill="#f6dc7e"/>
 <ellipse cx="596.4" cy="382.3" rx="6.3" ry="7.6" fill="none" stroke="#d9b040" stroke-width="0.8"/>
 <rect x="595.6" y="378.5" width="1.6" height="7.5" fill="#c99a30"/>
<circle cx="593" cy="404.7" r="3.5" fill="#5c9fe4"/><circle cx="599.8" cy="409.2" r="2.8" fill="#3450a8" stroke="#6aaaf0" stroke-width="0.9"/><circle cx="593.8" cy="412.2" r="1.5" fill="#eef4ff"/><circle cx="597.9" cy="413.9" r="0.8" fill="#3a2a8a"/>
<circle cx="593" cy="429.7" r="3.5" fill="#5c9fe4"/><circle cx="599.8" cy="434.2" r="2.8" fill="#3450a8" stroke="#6aaaf0" stroke-width="0.9"/><circle cx="593.8" cy="437.2" r="1.5" fill="#eef4ff"/><circle cx="597.9" cy="438.9" r="0.8" fill="#3a2a8a"/>
<circle cx="593" cy="454.7" r="3.5" fill="#5c9fe4"/><circle cx="599.8" cy="459.2" r="2.8" fill="#3450a8" stroke="#6aaaf0" stroke-width="0.9"/><circle cx="593.8" cy="462.2" r="1.5" fill="#eef4ff"/><circle cx="597.9" cy="463.9" r="0.8" fill="#3a2a8a"/>
<circle cx="593" cy="479.7" r="3.5" fill="#5c9fe4"/><circle cx="599.8" cy="484.2" r="2.8" fill="#3450a8" stroke="#6aaaf0" stroke-width="0.9"/><circle cx="593.8" cy="487.2" r="1.5" fill="#eef4ff"/><circle cx="597.9" cy="488.9" r="0.8" fill="#3a2a8a"/>

 <path d="M588 508.4 H590.5 M592 508.4 H593.5 M595.5 508.4 H598 M599.5 508.4 H604" stroke="#d0d0d8" stroke-width="1.2"/>
 <rect x="589.2" y="525.6" width="14" height="14.2" fill="#6cb0e4"/>
 <rect x="589.2" y="526.4" width="14" height="1.2" fill="#e8f4ff"/>
 <rect x="589.2" y="537.8" width="14" height="1.2" fill="#e8f4ff"/>
 <text x="590.5" y="536.5" font-family="Liberation Serif" font-size="10" font-weight="700" fill="#22307a">T</text>
 <text x="597" y="537.5" font-family="Liberation Serif" font-size="6.5" font-weight="700" fill="#22307a">x</text>
 <rect x="588" y="554.7" width="16" height="3.5" fill="#1c1640"/>
 <rect x="588" y="558" width="16" height="3.4" fill="#8a68d8"/>
 <rect x="588" y="575.5" width="16.2" height="15.8" fill="#b03232"/>
</svg>
<!-- scrollbar -->
<div class="a" style="left:738.5px;top:119.5px;width:3.5px;height:277px;background:#7a7a80"></div>
<!-- add button -->
<div class="a" style="left:566px;top:606.4px;width:170.5px;height:25px;background:#4c2cc8;border-radius:6px"></div>
<svg style="left:604px;top:613px" width="12" height="12" viewBox="0 0 12 12"><path d="M6 0.5 V11.5 M0.5 6 H11.5" stroke="#f4f4f8" stroke-width="1.3"/></svg>
<div class="t" style="left:625px;top:614px;font-size:10px;font-weight:700;letter-spacing:-0.3px;color:#f4f4f8">Add a new object</div>

<!-- tooltip -->
<div class="a" style="left:439.3px;top:65px;width:82px;height:17px;background:#5d5d60;border-radius:4px"></div>
<div class="t" style="left:445.7px;top:70px;font-size:7.7px;color:#e4e4e8">Close Objects Panel</div>
<!-- yellow highlight -->
<div class="a" style="left:548.4px;top:49.3px;width:190.2px;height:585px;border:2px solid #f4cc00"></div>
</body></html>
